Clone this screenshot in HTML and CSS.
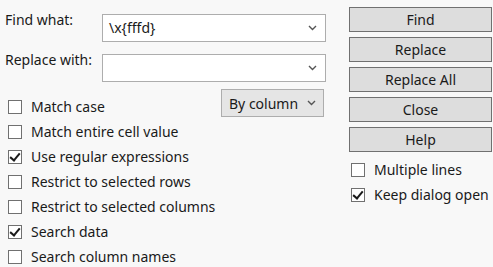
FILE: index.html
```html
<!DOCTYPE html>
<html lang="en">
    <head>
        <meta charset="UTF-8" />
        <title>Find and Replace</title>
        <link rel="stylesheet" href="styles.css">
    </head>
    <body>
        <div class="dialog">
            <div class="main">
                <div class="field-row">
                    <label class="field-label">Find what:</label>
                    <div class="combo">
                        <span class="combo-text">\x{fffd}</span>
                        <svg class="chevron" width="9" height="6" viewBox="0 0 9 6"><path d="M1 1 L4.5 4.5 L8 1" fill="none" stroke="#555" stroke-width="1.4"/></svg>
                    </div>
                </div>
                <div class="field-row">
                    <label class="field-label">Replace with:</label>
                    <div class="combo">
                        <span class="combo-text"></span>
                        <svg class="chevron" width="9" height="6" viewBox="0 0 9 6"><path d="M1 1 L4.5 4.5 L8 1" fill="none" stroke="#555" stroke-width="1.4"/></svg>
                    </div>
                </div>

                <div class="options">
                    <div class="checks">
                        <div class="check"><span class="box"></span>Match case</div>
                        <div class="check"><span class="box"></span>Match entire cell value</div>
                        <div class="check"><span class="box checked"></span>Use regular expressions</div>
                        <div class="check"><span class="box"></span>Restrict to selected rows</div>
                        <div class="check"><span class="box"></span>Restrict to selected columns</div>
                        <div class="check"><span class="box checked"></span>Search data</div>
                        <div class="check"><span class="box"></span>Search column names</div>
                    </div>
                    <div class="select">
                        <span>By column</span>
                        <svg class="chevron" width="9" height="6" viewBox="0 0 9 6"><path d="M1 1 L4.5 4.5 L8 1" fill="none" stroke="#555" stroke-width="1.4"/></svg>
                    </div>
                </div>
            </div>

            <div class="side">
                <button class="btn">Find</button>
                <button class="btn">Replace</button>
                <button class="btn">Replace All</button>
                <button class="btn">Close</button>
                <button class="btn">Help</button>
                <div class="side-checks">
                    <div class="check"><span class="box"></span>Multiple lines</div>
                    <div class="check"><span class="box checked"></span>Keep dialog open</div>
                </div>
            </div>
        </div>
    </body>
</html>
```

FILE: styles.css
```css
body {
    margin: 0;
    background: #f8f8f8;
    font-family: "Noto Sans", "Open Sans", sans-serif;
    font-size: 14px;
    color: #1a1a1a;
    overflow: hidden;
}
.dialog {
    display: flex;
    padding: 7px 0 0 5px;
}
.main {
    width: 321px;
    padding-top: 7px;
}
.field-row {
    display: flex;
    align-items: flex-start;
    margin-bottom: 12px;
}
.field-label {
    width: 97px;
    line-height: 20px;
    margin-top: -4px;
}
.combo {
    width: 224px;
    height: 28px;
    box-sizing: border-box;
    background: #fff;
    border: 1px solid #adadad;
    display: flex;
    align-items: center;
    justify-content: space-between;
    padding: 0 8px 0 6px;
}
.combo-text {
    line-height: 20px;
}
.chevron {
    display: block;
}
.options {
    display: flex;
    justify-content: space-between;
    margin-top: 3px;
    margin-left: 3px;
}
.check {
    display: flex;
    align-items: center;
    height: 25px;
    white-space: nowrap;
}
.box {
    width: 14px;
    height: 14px;
    box-sizing: border-box;
    border: 1px solid #707070;
    background: #fff;
    margin-right: 9px;
    position: relative;
}
.box.checked::after {
    content: "";
    position: absolute;
    left: 3px;
    top: 0px;
    width: 4px;
    height: 8px;
    border: solid #1a1a1a;
    border-width: 0 2.5px 2.5px 0;
    transform: rotate(40deg);
}
.select {
    width: 103px;
    height: 28px;
    box-sizing: border-box;
    background: #e5e5e5;
    border: 1px solid #adadad;
    display: flex;
    align-items: center;
    justify-content: space-between;
    padding: 0 7px 0 7px;
    margin-top: -5px;
    margin-right: 2px;
}
.side {
    display: flex;
    flex-direction: column;
    gap: 5px;
    padding-left: 23px;
}
.btn {
    width: 143px;
    height: 25px;
    background: #dddddd;
    border: 1px solid #707070;
    font-family: inherit;
    font-size: 14px;
    font-weight: 400;
    color: #1a1a1a;
    padding: 0;
    line-height: 20px;
}
.side-checks {
    padding-left: 2px;
}
```
